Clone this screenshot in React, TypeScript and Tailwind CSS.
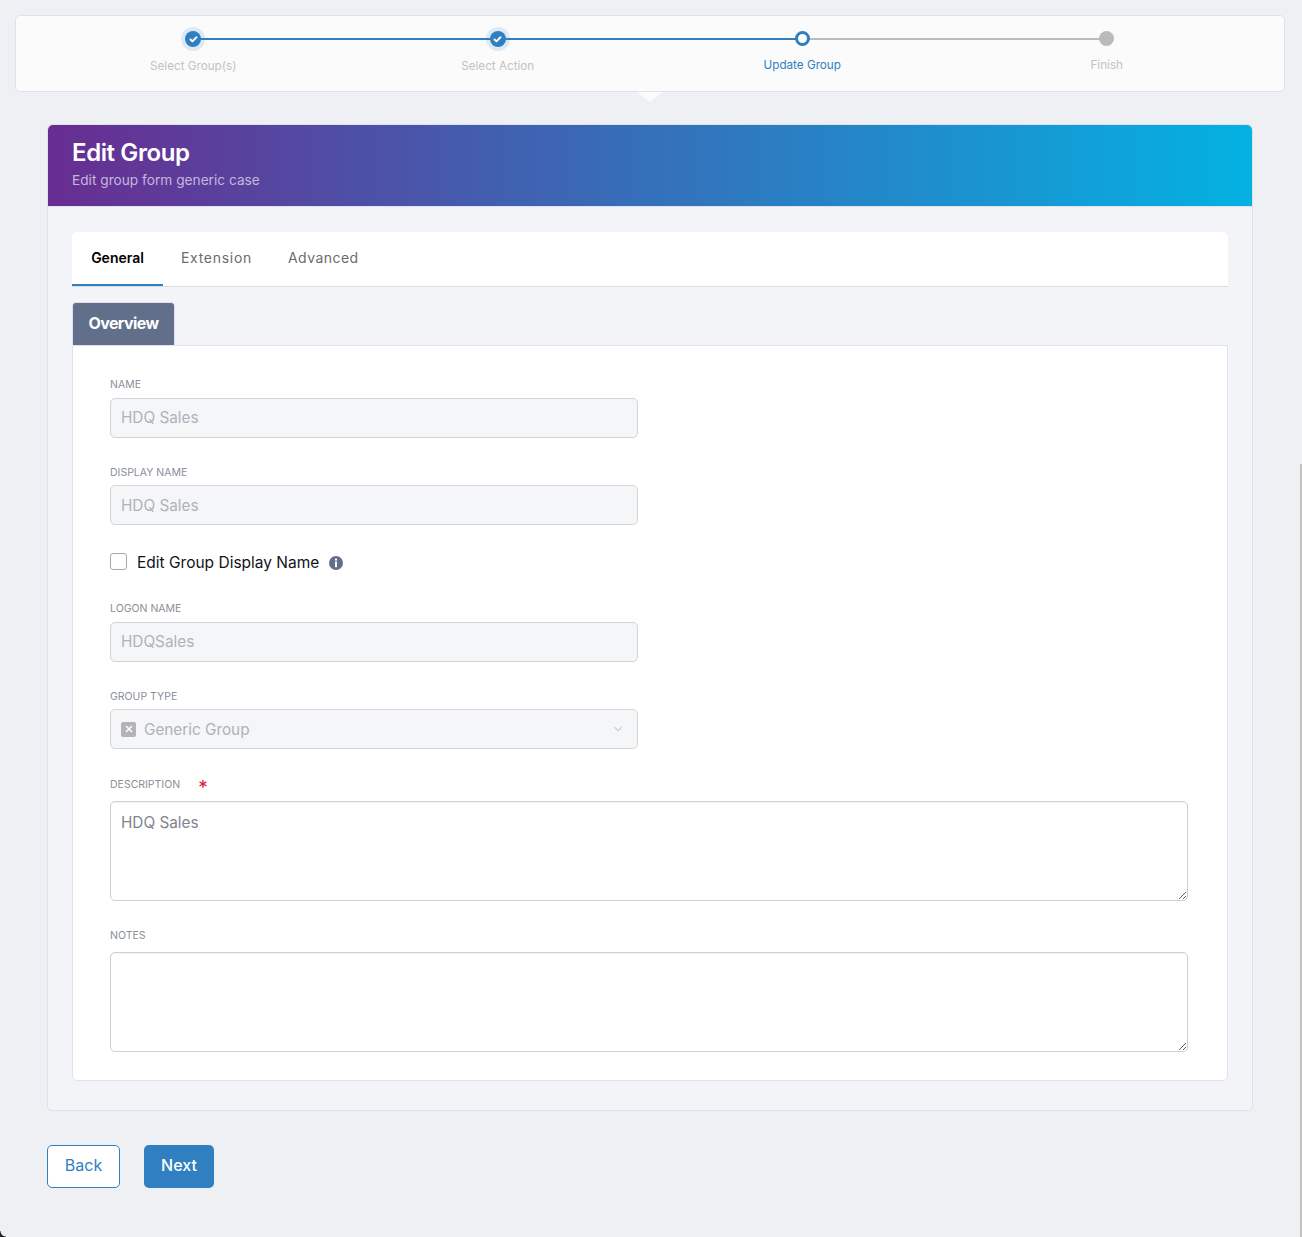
import { ChevronDown, Check, X } from 'lucide-react'

const font = "font-['Inter','Roboto',sans-serif]"

const steps = [
  { label: 'Select Group(s)', state: 'done' },
  { label: 'Select Action', state: 'done' },
  { label: 'Update Group', state: 'current' },
  { label: 'Finish', state: 'todo' },
]

function Stepper() {
  return (
    <div className="relative mx-[15px] mt-[15px] h-[77px] rounded-[5px] border border-[#dfe1ee] bg-[#fbfbfc] px-[25px]">
      <div className="grid grid-cols-4">
        {steps.map((step, i) => (
          <div key={step.label} className="relative flex h-[75px] flex-col items-center pt-[11px]">
            <div className="flex h-6 w-6 items-center justify-center">
              {step.state === 'done' && (
                <div className="flex h-6 w-6 shrink-0 items-center justify-center rounded-full bg-[#dde9f4]">
                  <div className="relative z-10 flex h-4 w-4 items-center justify-center rounded-full bg-[#2f7fc1]">
                    <Check size={9} strokeWidth={5} className="text-white" />
                  </div>
                </div>
              )}
              {step.state === 'current' && (
                <div className="relative z-10 mb-px h-[15px] w-[15px] rounded-full border-[3px] border-[#2f7fc1] bg-white" />
              )}
              {step.state === 'todo' && (
                <div className="relative z-10 mb-px h-[15px] w-[15px] rounded-full bg-[#bbbbbb]" />
              )}
            </div>
            {i < 3 && (
              <div
                className={`absolute top-[22px] left-1/2 z-[5] h-[2px] w-full ${i < 2 ? 'bg-[#2f7fc1]' : 'bg-[#bbbbbb]'}`}
              />
            )}
            <div
              className={`text-[11.7px] leading-[16px] ${
                step.state === 'done' ? 'mt-[7px] text-[#c2c2c6]' : 'mt-[6px]'
              } ${step.state === 'current' ? 'text-[#2f7fc1]' : ''} ${step.state === 'todo' ? 'text-[#c2c2c6]' : ''}`}
            >
              {step.label}
            </div>
          </div>
        ))}
      </div>
      <div className="absolute top-[76px] left-[621px] h-0 w-0 border-x-[13px] border-t-[10px] border-x-transparent border-t-[#fbfbfc]" />
    </div>
  )
}

function Label({ children, tall }: { children: React.ReactNode; tall?: boolean }) {
  return (
    <div className={`text-[10.5px] leading-[13px] text-[#8a8f99] ${tall ? 'mb-[10px]' : 'mb-[7px]'}`}>{children}</div>
  )
}

function DisabledInput({ value, nudge }: { value: string; nudge?: boolean }) {
  return (
    <input
      disabled
      value={value}
      className={`block h-10 w-[528px] rounded-[5px] border border-[#d2d4d8] bg-[#f5f6f8] px-[10px] text-[15.3px] text-[#aeb2ba] outline-none ${nudge ? 'pt-px' : 'pb-px'}`}
    />
  )
}

function App() {
  return (
    <div className="relative h-[1237px] overflow-hidden bg-[#eff0f4]">
      <div className={`${font} w-[1300px]`}>
        <Stepper />

        <div className="mx-[47px] mt-[32px] rounded-[5px] border border-[#dfe1ee] bg-[#f3f4f7]">
          <div className="h-[81px] rounded-t-[5px] bg-linear-to-r/srgb from-[#682d91] via-[#3570ba] via-50% to-[#04b1e2] px-6 pt-[13px]">
            <h1 className="text-[24px] leading-[30px] font-semibold tracking-[-0.4px] text-white">Edit Group</h1>
            <p className="mt-[2px] text-[13.7px] leading-[20px] text-[#c7b5dc]">Edit group form generic case</p>
          </div>

          <div className="border-t border-[#dfe1ee] px-6 pt-[25px] pb-[29px]">
            <div className="flex h-[55px] rounded-t-[5px] border-b border-[#dcdde2] bg-white">
              <div className="flex h-[54px] w-[91px] items-center justify-center border-b-2 border-[#2f7fc1] pb-px text-[14px] font-semibold text-black">
                General
              </div>
              <div className="flex h-[54px] items-center pb-[3px] pl-[18px] text-[14px] tracking-[0.7px] text-[#6f6a70]">
                Extension
              </div>
              <div className="flex h-[54px] items-center pb-[3px] pl-[36px] text-[14px] tracking-[0.45px] text-[#6f6a70]">
                Advanced
              </div>
            </div>

            <div className="mt-[15px] flex h-[43px] w-[103px] items-center justify-center rounded-t-[4px] border border-b-0 border-[#dfe1ee] bg-[#616f8a] pb-[3px] text-[16px] font-bold tracking-[-0.6px] text-white">
              Overview
            </div>

            <div className="rounded-b-[5px] border border-[#dfe1ee] bg-white px-[37px] pt-[32px] pb-[28px]">
              <Label>NAME</Label>
              <DisabledInput value="HDQ Sales" />

              <div className="mt-[28px]">
                <Label>DISPLAY NAME</Label>
                <div className="-mt-px">
                  <DisabledInput value="HDQ Sales" nudge />
                </div>
              </div>

              <div className="mt-[28px] flex h-[18px] items-center">
                <div className="mb-[2px] h-[17px] w-[17px] rounded-[3px] border border-[#a9a9ad] bg-white" />
                <span className="ml-[10px] pt-[2px] text-[15.5px] text-[#111317]">Edit Group Display Name</span>
                <svg viewBox="0 0 14 14" className="mt-[2px] ml-[10px] h-[14px] w-[14px]">
                  <circle cx="7" cy="7" r="7" fill="#616f8a" />
                  <rect x="6" y="2.6" width="2" height="2" fill="#fff" />
                  <rect x="6" y="5.6" width="2" height="5.6" fill="#fff" />
                </svg>
              </div>

              <div className="mt-[31px]">
                <Label>LOGON NAME</Label>
                <DisabledInput value="HDQSales" />
              </div>

              <div className="mt-[28px]">
                <Label>GROUP TYPE</Label>
                <div className="-mt-px flex h-10 w-[528px] items-center rounded-[5px] border border-[#d2d4d8] bg-[#f5f6f8] pr-[12px] pl-[10px]">
                  <div className="flex h-[15px] w-[15px] items-center justify-center rounded-[2px] bg-[#b4b4b6]">
                    <X size={10} strokeWidth={3.5} className="text-white" />
                  </div>
                  <span className="ml-2 flex-1 pt-[3px] text-[15.3px] text-[#aeb2ba]">Generic Group</span>
                  <ChevronDown size={14} className="text-[#cfd1d6]" />
                </div>
              </div>

              <div className="mt-[29px] flex">
                <Label tall>DESCRIPTION</Label>
                <span className="ml-[18px] h-[13px] text-[19px] leading-[19px] text-[#dc143c]">*</span>
              </div>
              <textarea
                defaultValue="HDQ Sales"
                className="block h-[100px] w-[1078px] rounded-[5px] border border-[#cfd0d2] bg-white px-[10px] py-[11px] text-[15.3px] leading-[20px] text-[#7f848e] shadow-[inset_0_1px_1px_rgba(0,0,0,0.05)] outline-none"
              />

              <div className="mt-[28px]">
                <Label tall>NOTES</Label>
                <textarea className="block h-[100px] w-[1078px] rounded-[5px] border border-[#cfd0d2] bg-white shadow-[inset_0_1px_1px_rgba(0,0,0,0.05)] outline-none" />
              </div>
            </div>
          </div>
        </div>

        <div className="mx-[47px] mt-[34px] flex gap-6">
          <button className="h-[43px] w-[73px] rounded-[5px] border border-[#2f7fc1] bg-white pb-[3px] text-[16px] text-[#2f7fc1]">
            Back
          </button>
          <button className="h-[43px] w-[70px] rounded-[5px] bg-[#2f7fc1] pb-[3px] text-[16px] font-medium text-white">
            Next
          </button>
        </div>
      </div>

      <div className="absolute top-[464px] right-0 bottom-0 w-[2px] bg-[#c1c1c1]" />
      <div className="absolute bottom-0 left-0 h-[6px] w-[6px] bg-[radial-gradient(circle_at_100%_0,transparent_5px,#222222_6px)]" />
    </div>
  )
}

export default App
